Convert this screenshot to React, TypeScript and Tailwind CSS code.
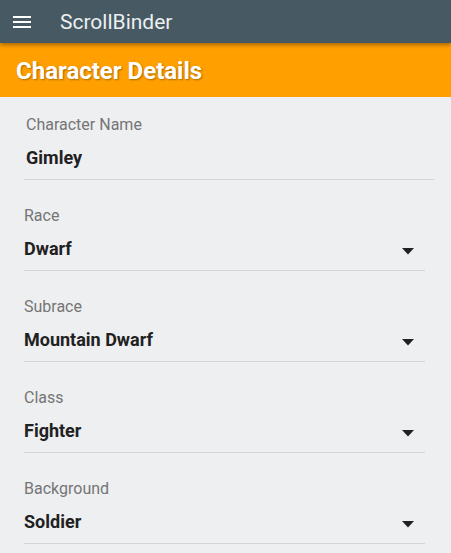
import React from "react";

function Arrow() {
  return (
    <svg width="12" height="7" viewBox="0 0 12 7" className="block">
      <path d="M0 0 L12 0 L6 6.5 Z" fill="#212121" />
    </svg>
  );
}

function Field({ label, value, select, name }: { label: string; value: string; select?: boolean; name?: boolean }) {
  return (
    <div className={name ? "w-[410px]" : "w-[401px]"}>
      <div className={`h-[20px] pt-[1px] leading-[20px] text-[16px] text-[#757575] ${name ? "pl-[2px]" : ""}`}>{label}</div>
      <div className={`mt-[12px] h-[24px] flex items-center justify-between ${name ? "pl-[2px]" : ""}`}>
        <span className="text-[18px] font-bold text-[#212121] leading-[24px]">{value}</span>
        {select && (
          <span className="mr-[11px] mt-[4px]">
            <Arrow />
          </span>
        )}
      </div>
      <div className="mt-[9px] h-px bg-[#d2d3d5]" />
    </div>
  );
}

export default function App() {
  return (
    <div className="w-[451px] h-[553px] overflow-hidden bg-[#eeeff1] font-['Roboto',sans-serif]">
      <header className="relative z-10 h-[43px] bg-[#475a64] flex items-center shadow-[0_2px_4px_rgba(0,0,0,0.35)]">
        <div className="ml-[13px] w-[18px] flex flex-col gap-[3px]">
          <div className="h-[2px] bg-white" />
          <div className="h-[2px] bg-white" />
          <div className="h-[2px] bg-white" />
        </div>
        <div className="ml-[29px] mt-[2px] text-[21px] text-[#eceff1] leading-none">ScrollBinder</div>
      </header>
      <div className="h-[54px] bg-[#ffa000] flex items-center px-4">
        <h1 className="mt-[1px] text-[24px] font-bold text-white [text-shadow:1px_1px_2px_rgba(0,0,0,0.35)] leading-none">
          Character Details
        </h1>
      </div>
      <div className="pl-[24px] pt-[17px] flex flex-col gap-[25px]">
        <Field label="Character Name" value="Gimley" name />
        <Field label="Race" value="Dwarf" select />
        <Field label="Subrace" value="Mountain Dwarf" select />
        <Field label="Class" value="Fighter" select />
        <Field label="Background" value="Soldier" select />
      </div>
    </div>
  );
}
